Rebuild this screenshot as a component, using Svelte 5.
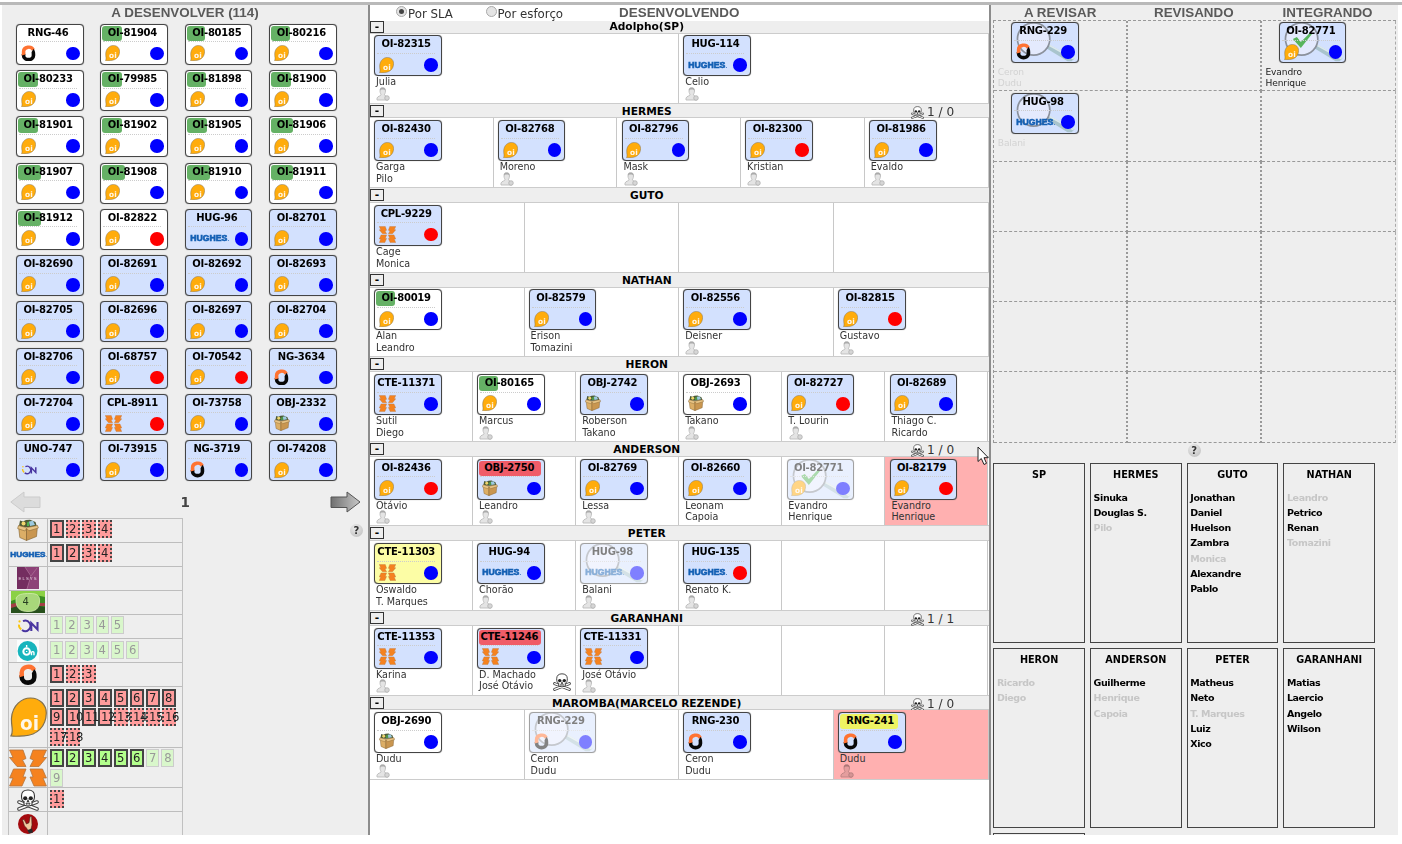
<script>
  const card = (id, o = {}) => ({ id, ...o });
  const g = (id, w) => card(id, { bg: 'w', band: 'green', bw: w });
  const backlog = [
    card('RNG-46', { bg: 'w' }), g('OI-81904', 20), g('OI-80185', 18.5), g('OI-80216', 18.5),
    g('OI-80233', 19.5), g('OI-79985', 20), g('OI-81898', 19.5), g('OI-81900', 19.5),
    g('OI-81901', 19.5), g('OI-81902', 20), g('OI-81905', 20), g('OI-81906', 21.7),
    g('OI-81907', 23.3), g('OI-81908', 23), g('OI-81910', 22.7), g('OI-81911', 21.7),
    g('OI-81912', 23.3), card('OI-82822', { bg: 'w', red: 1 }), card('HUG-96'), card('OI-82701'),
    card('OI-82690'), card('OI-82691'), card('OI-82692'), card('OI-82693'),
    card('OI-82705'), card('OI-82696'), card('OI-82697'), card('OI-82704'),
    card('OI-82706'), card('OI-68757', { red: 1 }), card('OI-70542', { red: 1 }), card('NG-3634'),
    card('OI-72704'), card('CPL-8911', { red: 1 }), card('OI-73758'), card('OBJ-2332'),
    card('UNO-747'), card('OI-73915'), card('NG-3719'), card('OI-74208')
  ];
  const lanes = [
    { t: 'Adolpho(SP)', n: 2, c: [card('OI-82315', { who: ['Julia'] }), card('HUG-114', { who: ['Celio'] })] },
    { t: 'HERMES', s: '1 / 0', n: 5, c: [card('OI-82430', { who: ['Garga', 'Pilo'] }), card('OI-82768', { who: ['Moreno'] }), card('OI-82796', { who: ['Mask'] }), card('OI-82300', { red: 1, who: ['Kristian'] }), card('OI-81986', { who: ['Evaldo'] })] },
    { t: 'GUTO', n: 4, c: [card('CPL-9229', { red: 1, who: ['Cage', 'Monica'] })] },
    { t: 'NATHAN', n: 4, c: [card('OI-80019', { bg: 'w', band: 'green', bw: 18.7, who: ['Alan', 'Leandro'] }), card('OI-82579', { who: ['Erison', 'Tomazini'] }), card('OI-82556', { who: ['Deisner'] }), card('OI-82815', { red: 1, who: ['Gustavo'] })] },
    { t: 'HERON', n: 6, c: [card('CTE-11371', { who: ['Sutil', 'Diego'] }), card('OI-80165', { bg: 'w', band: 'green', bw: 18.7, who: ['Marcus'] }), card('OBJ-2742', { who: ['Roberson', 'Takano'] }), card('OBJ-2693', { bg: 'w', who: ['Takano'] }), card('OI-82727', { red: 1, who: ['T. Lourin'] }), card('OI-82689', { who: ['Thiago C.', 'Ricardo'] })] },
    { t: 'ANDERSON', s: '1 / 0', n: 6, c: [card('OI-82436', { red: 1, who: ['Otávio'] }), card('OBJ-2750', { band: 'red', bw: 62, who: ['Leandro'] }), card('OI-82769', { who: ['Lessa'] }), card('OI-82660', { who: ['Leonam', 'Capoia'] }), card('OI-82771', { faded: 1, mag: 1, check: 1, who: ['Evandro', 'Henrique'] }), card('OI-82179', { red: 1, hot: 1, who: ['Evandro', 'Henrique'] })] },
    { t: 'PETER', n: 6, c: [card('CTE-11303', { bg: 'y', who: ['Oswaldo', 'T. Marques'] }), card('HUG-94', { who: ['Chorão'] }), card('HUG-98', { faded: 1, mag: 1, who: ['Balani'] }), card('HUG-135', { red: 1, who: ['Renato K.'] })] },
    { t: 'GARANHANI', s: '1 / 1', n: 6, c: [card('CTE-11353', { who: ['Karina'] }), card('CTE-11246', { band: 'red', bw: 62, skull: 1, who: ['D. Machado', 'José Otávio'] }), card('CTE-11331', { who: ['José Otávio'] })] },
    { t: 'MAROMBA(MARCELO REZENDE)', s: '1 / 0', n: 4, c: [card('OBJ-2690', { bg: 'w', who: ['Dudu'] }), card('RNG-229', { faded: 1, mag: 1, who: ['Ceron', 'Dudu'] }), card('RNG-230', { who: ['Ceron', 'Dudu'] }), card('RNG-241', { band: 'yellow', bw: 58, hot: 1, who: ['Dudu'] })] }
  ];
  const slots = Array(18).fill(null);
  slots[0] = card('RNG-229', { mag: 1, pale: 1, who: ['Ceron', 'Dudu'] });
  slots[2] = card('OI-82771', { mag: 1, check: 1, who: ['Evandro', 'Henrique'] });
  slots[3] = card('HUG-98', { mag: 1, pale: 1, who: ['Balani'] });
  // A leading "~" marks a person who is already allocated.
  const teams = [
    ['SP', []], ['HERMES', ['Sinuka', 'Douglas S.', '~Pilo']],
    ['GUTO', ['Jonathan', 'Daniel', 'Huelson', 'Zambra', '~Monica', 'Alexandre', 'Pablo']],
    ['NATHAN', ['~Leandro', 'Petrico', 'Renan', '~Tomazini']],
    ['HERON', ['~Ricardo', '~Diego']], ['ANDERSON', ['Guilherme', '~Henrique', '~Capoia']],
    ['PETER', ['Matheus', 'Neto', '~T. Marques', 'Luiz', 'Xico']],
    ['GARANHANI', ['Matias', 'Laercio', 'Angelo', 'Wilson']], ['', []]
  ];
  // Chips: total count, how many have a solid edge, tone of the solid ones.
  const legend = [
    { k: 'box', n: 4, solid: 1 }, { k: 'hughes', n: 4, solid: 2 }, { k: 'elsys', n: 0 }, { k: 'four', n: 0 },
    { k: 'on', n: 5, free: 0 }, { k: 'teal', n: 6, free: 0 }, { k: 'ring', n: 3, solid: 1 },
    { k: 'oi', n: 18, solid: 12, h: 60.7 }, { k: 'cross', n: 9, free: 6, h: 40.4 },
    { k: 'skull', n: 1, solid: 0 }, { k: 'hand', n: 0 }
  ];
  const kinds = { OI: 'oi', RNG: 'ring', NG: 'ring', HUG: 'hughes', CPL: 'cross', CTE: 'cross', OBJ: 'box', UNO: 'on' };
  const kind = (id) => kinds[id.split('-')[0]];
  const chip = (r, i) => r.free !== undefined ? (i < r.free ? 'lime' : 'pale') : i < r.solid ? 'pink' : 'pink dash';
</script>

{#snippet logo(k)}
  {#if k === 'oi'}
    <svg class="logo oi" viewBox="0 0 37 40"><path d="M1 38.8C4 35 1 29 1.5 21C2.5 8 12 1 20.5 1C30 1 36.3 8 36.3 16C36 30 27 38 14 38.8C8 39.4 4 39.6 1 38.8Z" fill="#ffac0c" stroke="#80704e" stroke-width="1.2" /><text x="10" y="33" font-family="DejaVu Sans" font-weight="bold" font-size="19" fill="#fff6e8" textLength="19" lengthAdjust="spacingAndGlyphs">oi</text></svg>
  {:else if k === 'ring'}
    <svg class="logo ring" viewBox="0 0 20 22"><path d="M3.4 13V9C3.4 2 14 .8 16.4 6.5" fill="none" stroke="#ff7332" stroke-width="4.6" /><path d="M15.2 7.5C16.8 8.4 16.6 10 16.6 14C16.6 21.4 3.4 21.4 3.4 13.5V12" fill="none" stroke="#080808" stroke-width="4.8" /><path d="M1 12L5.7 9.5V12.5L1 14Z" fill="#ff7332" /></svg>
  {:else if k === 'hughes'}
    <svg class="logo hughes" viewBox="0 0 39 8"><text x="0.3" y="7" font-family="Liberation Sans" font-weight="bold" font-size="8.2" fill="#1460b4" stroke="#1460b4" stroke-width=".6" textLength="37" lengthAdjust="spacingAndGlyphs">HUGHES</text><circle cx="38.3" cy="6.6" r=".5" fill="#1460b4" /></svg>
  {:else if k === 'cross'}
    <svg class="logo cross" viewBox="0 0 38 38"><g fill="#f5821f" stroke="#b4753f" stroke-width=".8"><path d="M24 1H37.5L34 8.5H37.5L30 17.5H21L24.5 11 21 9.5Z" /><path d="M14 1H.5L4 8.5H.5L8 17.5H17L13.5 11 17 9.5Z" /><path d="M4.5 20H17L14 28H17L13 37H.6L4 29H.6Z" /><path d="M33.5 20H21L24 28H21L25 37H37.4L34 29H37.4Z" /></g></svg>
  {:else if k === 'box'}
    <svg class="logo box" viewBox="0 0 22 22"><path d="M2 7L3 1.5L6 2.5L9 1L13 .8L18.5 3L20 8H2Z" fill="#4d5a35" /><circle cx="6.5" cy="4.5" r="2" fill="#f0d66c" /><path d="M12 2.5L16 1.8L18 6L13 7Z" fill="#9cc9df" /><path d="M10 3.5L12 2.5V7H10Z" fill="#4caf50" /><path d="M1.5 7L9.5 9.5V21.5L2.8 18.5Z" fill="#dcae66" stroke="#80602e" stroke-width=".6" /><path d="M9.5 9.5L20.5 7L19.5 17.5L9.5 21.5Z" fill="#c99650" stroke="#80602e" stroke-width=".6" /><path d="M1.5 6.5L.6 9.5L8 12L9.5 9.2L12 11.8L21.4 9L20.5 6.5L9.5 8.6Z" fill="#e9c586" stroke="#8d6b38" stroke-width=".6" /></svg>
  {:else if k === 'on'}
    <svg class="logo on" viewBox="0 0 22 14"><path d="M6 2.2A5.2 5.2 0 1 1 5 11" fill="none" stroke="#4935a0" stroke-width="2" /><path d="M4.3 10.4A5 5 0 0 1 2 5.6" fill="none" stroke="#f9c40f" stroke-width="1.9" /><circle cx="2.5" cy="2.4" r="1.1" fill="#f9c40f" /><path d="M14.3 12V4L20.5 10.5V3" fill="none" stroke="#4935a0" stroke-width="2.1" /></svg>
  {:else if k === 'teal'}
    <svg class="logo sq" viewBox="0 0 24 24"><path d="M0 0H24V24H0Z" fill="#fafdfd" /><circle cx="11.5" cy="12" r="10.8" fill="#17b5bd" /><circle cx="10.5" cy="12.5" r="3.6" fill="none" stroke="#fff" stroke-width="2.2" /><path d="M10.5 5.5V8M10.5 12V13M15.8 16.5V13.5C16.5 12.4 18.5 12.4 18.5 14V16.5" fill="none" stroke="#fff" stroke-width="1.5" /></svg>
  {:else if k === 'elsys'}
    <svg class="logo sq" viewBox="0 0 22 22"><path d="M0 0H22V22H0Z" fill="#742d60" /><path d="M8 0L15 9L10 22H22V0Z" fill="#8d4177" /><path d="M8 0L14 9L20 1M14 9L10 22" fill="none" stroke="#a66590" stroke-width="1" /><text x="1.5" y="12.5" font-family="Liberation Sans" font-size="4.2" fill="#ecd5e6" textLength="18">ELSYS</text></svg>
  {:else if k === 'four'}
    <svg class="logo wide" viewBox="0 0 34 22"><path d="M0 0H34V22H0Z" fill="#3a8c22" /><path d="M0 0H34V6L20 3L0 10Z" fill="#8bd145" /><path d="M0 14L8 11L34 16V22H0Z" fill="#27501c" /><path d="M0 13L5 12L7 15L0 17ZM29 12H34V15H28Z" fill="#a33f45" /><path d="M5 9C5 3 12 2.5 19 2.5C27 2.5 29 5 28.5 11C28 18 24 20.5 17 20.5C9 20.5 5 17 5 9Z" fill="#a8d77a" stroke="#d4eeaf" stroke-width=".8" /><text x="11.5" y="14" font-family="DejaVu Sans" font-size="10" fill="#283f21">4</text></svg>
  {:else if k === 'skull'}
    <svg class="logo sq skull" viewBox="0 0 22 22"><path d="M2 13L20 20M20 13L2 20" stroke="#444" stroke-width="3.6" stroke-linecap="round" /><path d="M2 13L20 20M20 13L2 20" stroke="#fff" stroke-width="1.6" stroke-linecap="round" /><path d="M4.5 7C4.5 3 7 1 11 1S17.5 3 17.5 7C17.5 10 17 12 15 12.5V16Q11 18 7 16V12.5C5 12 4.5 10 4.5 7Z" fill="#fff" stroke="#333" stroke-width="1.1" /><ellipse cx="8.2" cy="9.2" rx="2.1" ry="2" fill="#222" /><ellipse cx="13.8" cy="9.2" rx="2.1" ry="2" fill="#222" /><path d="M11 10.5L10 13H12ZM8.5 14.5H13.5M9.5 13.5V16M11 13.7V16.5M12.5 13.5V16" fill="#222" stroke="#333" stroke-width=".6" /></svg>
  {:else}
    <svg class="logo sq" viewBox="0 0 22 22"><circle cx="11" cy="11" r="10" fill="#a30a0e" /><path d="M5.5 7L7 6.3L9.5 11L12 9.8L13.2 3.5L14.6 3.5L15 12L14 16L15 18L11.5 18.5L9.5 15L7.5 13Z" fill="#f1c9a0" stroke="#442820" stroke-width=".6" /><path d="M10.5 17L15 15.5L16 19.5L12 20.5Z" fill="#282828" /></svg>
  {/if}
{/snippet}

{#snippet ticket(c)}
  <div class="card {c.bg ?? 'b'}" class:faded={c.faded}>
    {#if c.mag}
      <svg class="mag" viewBox="0 0 66 39"><path d="M36 21L63 35.5L60 38.5H56L35 25.5Z" fill="#a9c4cd" /><path d="M37 22L62 36" stroke="#dce9ec" stroke-width="1.6" /><circle cx="21.8" cy="16" r="16.3" fill="#f2f2fc" fill-opacity=".55" stroke="#8b919c" stroke-width="1.7" />{#if c.check}<path d="M13 16L17 14L21 19L30 10H33L21 25Z" fill="#58b55c" />{/if}</svg>
    {/if}
    <div class="id">{#if c.band}<i class={c.band} style="width:{c.bw}px"></i>{/if}<b>{c.id}</b></div>
    <div class="foot">{@render logo(kind(c.id))}<span class="dot" class:red={c.red}></span></div>
  </div>
{/snippet}

<div class="page">
  <div class="topline"></div>
  <main>
    <section class="left">
      <h1>A DESENVOLVER (114)</h1>
      <div class="backlog">{#each backlog as c}{@render ticket(c)}{/each}</div>
      <div class="pager">
        <svg viewBox="0 0 31 22"><path d="M.8 11L14 1V6H30V16.5H14V21Z" fill="#dcdcdc" stroke="#cbcbcb" /></svg>
        <b>1</b>
        <svg viewBox="0 0 31 22"><defs><linearGradient id="ar"><stop stop-color="#707070" /><stop offset="1" stop-color="#c8c8c8" /></linearGradient></defs><path d="M30 11L17 1V6H1V16.5H17V21Z" fill="url(#ar)" stroke="#555" /></svg>
      </div>
      <div class="under">
        <div class="legend">
          {#each legend as r}
            <div class="row" style="height:{r.h ?? 24.1}px">
              <div class="ic">{@render logo(r.k)}</div>
              <div class="chips">{#each Array(r.n) as _, i}<span class="chip {chip(r, i)}"><span>{i + 1}</span></span>{/each}</div>
            </div>
          {/each}
        </div>
        <span class="help">?</span>
      </div>
    </section>

    <section class="mid">
      <header>
        <label class="one"><i class="radio on"></i>Por SLA</label>
        <label class="two"><i class="radio"></i>Por esforço</label>
        <h1>DESENVOLVENDO</h1>
      </header>
      {#each lanes as l}
        <div class="lane">
          <div class="bar"><span class="min">-</span><b>{l.t}</b>{#if l.s}<span class="stat">{@render logo('skull')}{l.s}</span>{/if}</div>
          <div class="cells">
            {#each Array(l.n) as _, i}
              {@const c = l.c[i]}
              <div class="cell" class:hot={c?.hot}>
                {#if c}
                  {@render ticket(c)}
                  {#each c.who as w}<p>{w}</p>{/each}
                  {#if c.who.length === 1}
                    <svg class="person" viewBox="0 0 14 14"><path d="M4 4C4 1 5 .7 6.7 .7S9.5 1.5 9.5 4C9.5 6 8.5 7 8.3 8L12 10.5V13H1V11C2 9 4.5 9 5.1 8C5 7 4 6 4 4Z" fill="#e4e4e4" stroke="#bcbcbc" stroke-width=".9" /><path d="M4 3.5C4 1 5 .7 6.7 .7S9.5 1 9.5 3.5L8 2.5H5.5Z" fill="#aaa" /><circle cx="11" cy="11" r="2.3" fill="#d6d6d6" stroke="#aaa" stroke-width=".7" /></svg>
                  {/if}
                  {#if c.skull}<span class="mark">{@render logo('skull')}</span>{/if}
                {/if}
              </div>
            {/each}
          </div>
        </div>
      {/each}
    </section>

    <section class="right">
      <div class="heads"><h1>A REVISAR</h1><h1>REVISANDO</h1><h1>INTEGRANDO</h1></div>
      <div class="slots">
        {#each slots as c}
          <div class="slot">
            {#if c}{@render ticket(c)}<div class="who" class:pale={c.pale}>{#each c.who as w}<p>{w}</p>{/each}</div>{/if}
          </div>
        {/each}
      </div>
      <div class="hrow"><span class="help">?</span></div>
      <div class="teams">
        {#each teams as [t, who]}
          <div class="team"><h2>{t}</h2>{#each who as w}<p class:busy={w[0] === '~'}>{w.replace('~', '')}</p>{/each}</div>
        {/each}
      </div>
    </section>
  </main>
  <svg class="cursor" viewBox="0 0 12 20"><path d="M1 1V15.5L4.3 12.5L7 18.5L9.5 17.3L7 11.7H11.3Z" fill="#fff" stroke="#222" stroke-width="1" /></svg>
</div>

<style>
  :global(body) { margin: 0; background: #fff; }
  * { box-sizing: border-box; }
  .page { position: relative; width: 1402px; height: 844px; overflow: hidden; padding-top: 2px; font-family: "DejaVu Sans", sans-serif; color: #222; }
  .topline { height: 2.5px; background: #b9b9b9; }
  main { display: flex; height: 830px; padding-left: 2px; overflow: hidden; }
  section { height: 830px; overflow: hidden; flex: none; }
  h1, h2, p { margin: 0; }
  h1 { font: bold 13.4px/15px "Liberation Sans", sans-serif; color: #5a5a5a; text-align: center; white-space: nowrap; }
  svg { display: block; flex: none; }

  .left { width: 368px; background: #eee; border-right: 2px solid #8c8c8c; }
  .backlog { display: grid; grid-template-columns: repeat(4, 84.45px); grid-auto-rows: 46.27px; padding: 4.4px 0 0 14px; height: 467px; }
  .card { position: relative; width: 67.5px; height: 41px; border: 1px solid #444; border-radius: 4px; padding: 1px; display: flex; flex-direction: column; box-shadow: 0 0 .8px #555; isolation: isolate; }
  .card.b { background: #d3e1fe; }
  .card.w { background: #fff; }
  .card.y { background: #fcfda5; }
  .faded { opacity: .5; }
  .mag { position: absolute; left: 0; top: 0; width: 65.5px; height: 39px; z-index: -1; }
  .id { position: relative; height: 16.5px; width: 58px; margin-left: 1px; border-bottom: 1px dotted #ccc; font-size: 10px; line-height: 14px; color: #000; display: flex; justify-content: center; }
  .id b { position: relative; letter-spacing: -.24px; white-space: nowrap; }
  .id i { position: absolute; left: -1px; top: 0; height: 15px; border-radius: 3px; }
  .green { background: #65b165; }
  .id .red { background: #f05c68; }
  .yellow { background: #eef363; }
  .foot { flex: 1; display: flex; justify-content: space-between; align-items: center; padding: 1px 2px 0 2.8px; }
  .dot { width: 13.6px; height: 13.6px; border-radius: 50%; background: #00f; margin-top: 1px; }
  .dot.red { background: #f00; }
  .foot .oi { width: 15px; height: 16px; }
  .foot .ring { width: 15px; height: 16.5px; }
  .foot .hughes { width: 39px; height: 8px; }
  .foot .cross { width: 17px; height: 17px; }
  .foot .box { width: 16px; height: 16px; }
  .foot .on { width: 16px; height: 10px; }

  .pager { display: flex; justify-content: space-between; align-items: center; height: 31px; padding: 0 7.5px 0 8px; }
  .pager svg { width: 31px; height: 22px; }
  .pager b { font-size: 13.5px; color: #444; }
  .under { display: flex; justify-content: space-between; align-items: flex-start; padding: 0 5.5px 0 6px; }
  .under .help { margin-top: 6px; margin-right: -.5px; }
  .help { width: 13px; height: 13px; border-radius: 50%; background: radial-gradient(circle at 40% 30%, #eaeaea, #bcbcbc); font-weight: bold; font-size: 10px; line-height: 13px; text-align: center; color: #333; }
  .legend { width: 175px; border: 1px solid #c0c0c0; }
  .row { display: flex; border-bottom: 1.4px solid #bdbdbd; }
  .ic { width: 39px; flex: none; border-right: 1.4px solid #bdbdbd; display: flex; align-items: center; justify-content: center; }
  .ic .oi { width: 37px; height: 40px; }
  .ic .cross { width: 38px; height: 38px; }
  .ic .hughes { width: 37px; height: 8px; }
  .ic .ring { width: 20px; height: 21px; }
  .ic .box, .ic .sq { width: 22px; height: 22px; }
  .ic .wide { width: 34px; height: 22px; }
  .ic .on { width: 22px; height: 14px; }
  .chips { flex: 1; display: flex; flex-wrap: wrap; align-content: flex-start; gap: 1.5px 2px; padding: 1.6px 3px 0 2px; isolation: isolate; }
  .chip { width: 14px; height: 18px; font-size: 11.6px; line-height: 15px; padding-left: 1px; letter-spacing: -.3px; border: 2px solid #444; color: #222; white-space: nowrap; }
  .chip span { position: relative; z-index: 1; }
  .pink { background: #ff9c9c; }
  .dash { border-style: dotted; }
  .lime { background: #b3ff8c; }
  .chip.pale { width: 13.2px; border: 1px solid #ccc; background: #d9f7cb; color: #999; padding-left: 2px; line-height: 16px; }

  .mid { width: 620.5px; background: #fff; border-right: 2px solid #8c8c8c; }
  .mid header { position: relative; height: 16.5px; }
  .mid header label { position: absolute; top: 1px; display: flex; align-items: center; font-size: 11.8px; line-height: 16px; color: #333; gap: 1px; }
  .one { left: 26px; }
  .two { left: 115.5px; }
  .radio { width: 11px; height: 11px; border-radius: 50%; border: 1px solid #aaa; background: #e4e4e4; margin-top: -4px; display: grid; place-items: center; }
  .radio.on::after { content: ""; width: 5px; height: 5px; border-radius: 50%; background: #444; }
  .lane { height: 84.55px; }
  .lane:nth-child(2) { height: 82.7px; }
  .bar { position: relative; height: 14.8px; background: #eee; border-bottom: 1px solid #ccc; text-align: center; font-size: 10.65px; line-height: 15px; color: #000; padding-right: 65px; }
  .lane:nth-child(2) .bar { height: 12.6px; line-height: 12px; }
  .min { position: absolute; left: 0; top: 1px; width: 14px; height: 12px; border: 1px solid #333; font-weight: bold; line-height: 9px; }
  .lane:nth-child(2) .min { top: 0; height: 11.5px; }
  .stat { position: absolute; left: 541px; top: 2px; display: flex; align-items: center; gap: 3px; font-size: 12.1px; line-height: 13px; color: #333; }
  .stat .skull { width: 13px; height: 13px; }
  .cells { display: flex; height: 69.75px; border-bottom: 1px solid #ccc; }
  .lane:nth-child(2) .cells { height: 70.1px; }
  .cell { position: relative; flex: 1 1 0; min-width: 0; border-right: 1px solid #c8c8c8; padding: 1.9px 0 0 4.2px; }
  .cell p { margin-left: 1.8px; font-size: 9.6px; line-height: 11.6px; color: #333; }
  .hot { background: #ffb0b0; }
  .person { width: 14px; height: 14px; margin: -1px 0 0 2px; mix-blend-mode: multiply; }
  .mark { position: absolute; right: 4px; bottom: 4px; }
  .mark .skull { width: 18px; height: 18px; }

  .right { width: 407.5px; background: #eee; padding-left: 2.8px; }
  .heads { display: flex; height: 15.6px; }
  .heads h1 { width: 133.7px; }
  .slots { width: 402.5px; display: grid; grid-template-columns: repeat(3, 1fr); grid-auto-rows: 70.25px; border-left: 1px dashed #999; border-top: 1px dashed #999; }
  .slot { border-bottom: 1px dashed #999; border-right: 2px dotted #999; padding: 1.2px 0 0 16.8px; }
  .slot:nth-child(3n) { border-right: 1px dashed #aaa; }
  .who { margin: 4px 0 0 -13.3px; font-size: 9.1px; line-height: 10.6px; letter-spacing: -.12px; color: #222; }
  .who.pale { color: #d3d3d3; }
  .hrow { display: flex; justify-content: center; padding: 1.5px 3px 0 0; height: 20.2px; }
  .teams { display: grid; grid-template-columns: repeat(4, 91.7px); grid-auto-rows: 180px; gap: 5.2px 5px; }
  .team { border: 1px solid #444; padding: 3.5px 2.6px; }
  .team h2 { font-size: 9.7px; line-height: 15px; text-align: center; color: #000; margin-bottom: 7.9px; }
  .team p { font-weight: bold; font-size: 9.5px; line-height: 15.1px; letter-spacing: -.4px; color: #000; }
  .team p.busy { color: #c6c6c6; }
  .cursor { position: absolute; left: 977px; top: 446px; width: 12px; height: 20px; }
</style>
